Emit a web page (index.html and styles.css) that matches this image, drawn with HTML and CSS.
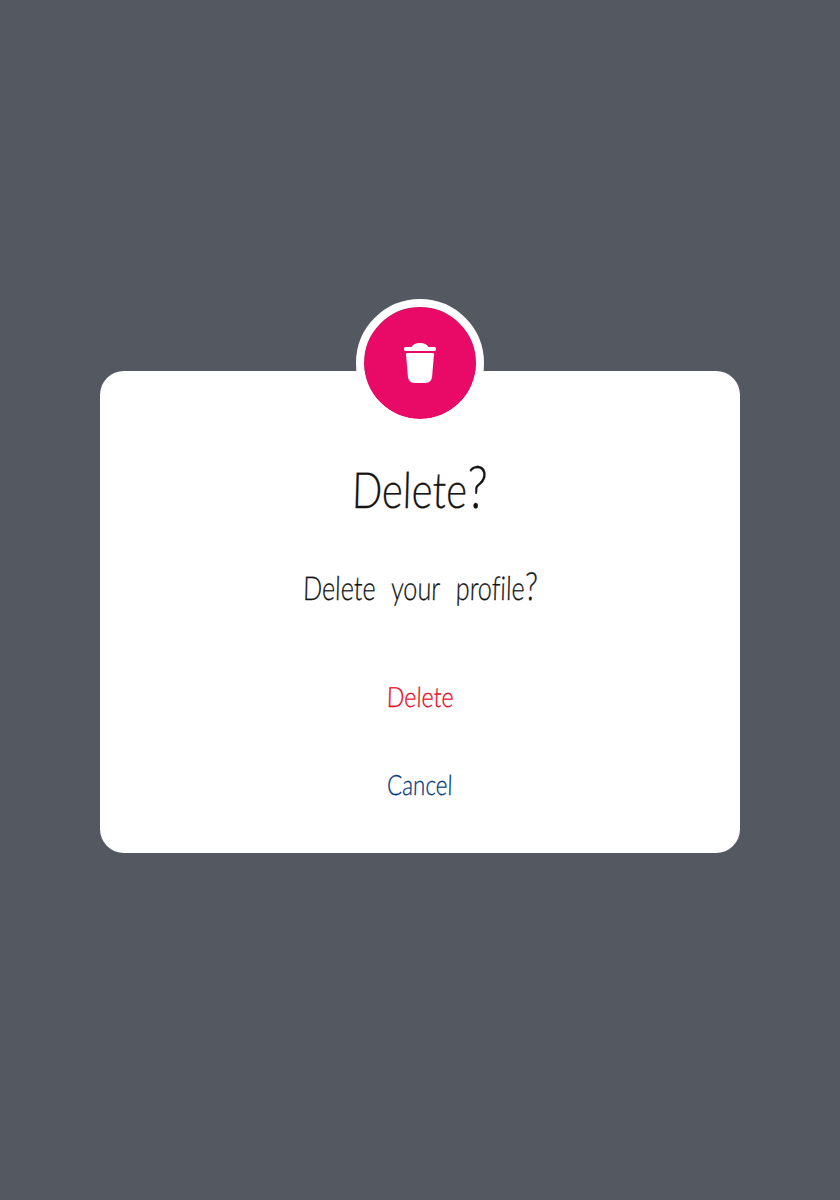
FILE: index.html
```html
<!DOCTYPE html>
<html lang="en">
<head>
<meta charset="utf-8">
<title>Delete?</title>
<link rel="stylesheet" href="styles.css">
</head>
<body>
<main class="dialog" role="dialog" aria-labelledby="title">
  <div class="badge">
    <svg class="trash" viewBox="0 0 32 40" aria-hidden="true">
      <path d="M1.8 4H7.6C8.8 1.4 12 0 16 0s7.200 1.400 8.400 4H30.200a1.800 1.800 0 0 1 0 4H1.800a1.800 1.800 0 0 1 0-4Z"/>
      <path d="M3.200 10H28.800Q30.100 10 30 11.300L28.100 33.500Q27.500 40 21.500 40H10.500Q4.500 40 3.900 33.500L2 11.300Q1.900 10 3.200 10Z"/>
    </svg>
  </div>
  <h1 class="title" id="title"><span class="title-text">Delete<span class="mark">?</span></span></h1>
  <p class="message"><span class="message-text">Delete your profile<span class="mark">?</span></span></p>
  <div class="actions">
    <button class="action action-delete"><span class="delete-text">Delete</span></button>
    <button class="action action-cancel"><span class="cancel-text">Cancel</span></button>
  </div>
</main>
</body>
</html>
```
FILE: styles.css
```css
* { box-sizing: border-box; }
body {
  margin: 0;
  height: 1200px;
  padding-top: 371px;
  background: #545860;
  color: #141414;
  font-family: Lato, "Open Sans", sans-serif;
  font-weight: 300;
}
.dialog {
  position: relative;
  width: 640px;
  height: 482px;
  margin: 0 auto;
  padding-top: 88px;
  border-radius: 24px;
  background: #fff;
  text-align: center;
}
.badge {
  position: absolute;
  top: -72px;
  left: 256px;
  width: 128px;
  height: 128px;
  display: flex;
  align-items: center;
  justify-content: center;
  border: 8px solid #fff;
  border-radius: 50%;
  background: #e80a66;
  background-clip: padding-box;
}
.trash { width: 32px; height: 40px; fill: #fff; }
.title {
  height: 60px;
  margin: 0 0 44px;
  font-size: 50px;
  font-weight: 300;
  line-height: 60px;
}
.message {
  height: 48px;
  margin: 0 0 41px;
  font-size: 33px;
  line-height: 48px;
  word-spacing: 12px;
  font-variant-ligatures: none;
}
.title-text, .message-text, .delete-text, .cancel-text {
  display: inline-block;
  white-space: nowrap;
  -webkit-text-stroke: .3px currentColor;
}
.title-text { transform: scaleX(.8) skewX(-2deg); }
.message-text { transform: scaleX(.765) skewX(-2deg); }
.delete-text { transform: scaleX(.83) skewX(-2deg); }
.cancel-text { transform: scaleX(.8) skewX(-2deg); }
.mark {
  font-size: 1.18em;
  line-height: 0;
}
.actions { display: flex; flex-direction: column; }
.action {
  height: 88px;
  padding: 0;
  border: 0;
  background: none;
  font: inherit;
  font-size: 28px;
  line-height: 88px;
}
.action-delete { color: #e80c22; }
.action-cancel { color: #003b76; }
```
